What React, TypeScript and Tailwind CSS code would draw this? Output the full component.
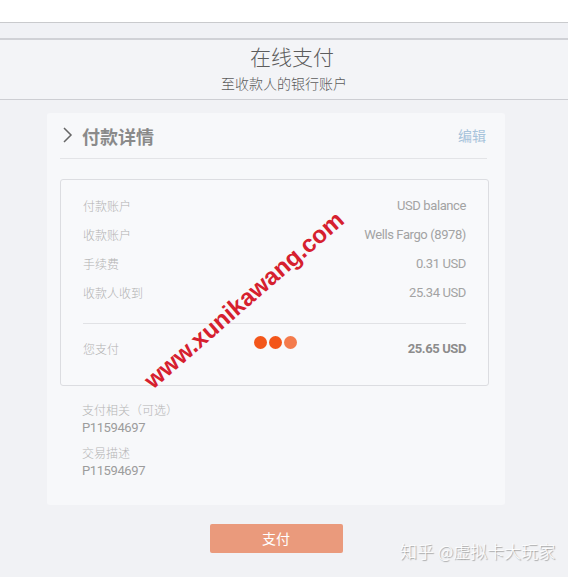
import React from 'react';

const rows = [
  { label: '付款账户', value: 'USD balance' },
  { label: '收款账户', value: 'Wells Fargo (8978)' },
  { label: '手续费', value: '0.31 USD' },
  { label: '收款人收到', value: '25.34 USD' },
];

const cjk = "font-['Noto_Sans_CJK_SC','Noto_Sans',sans-serif]";
const num = "font-['Roboto','Noto_Sans_CJK_SC',sans-serif] tracking-[-0.4px]";

export default function App() {
  return (
    <div className={`relative w-[568px] h-[577px] overflow-hidden bg-[#f1f2f5] ${cjk}`}>
      {/* top bars */}
      <div className="h-[23px] bg-white border-b border-[#c9cacd]" />
      <div className="h-[17px] bg-[#f0f1f5] border-b-2 border-[#d0d1d6]" />
      <div className="h-[60px] bg-[#f3f4f7] border-b border-[#cdced3] flex flex-col items-center">
        <div className="mt-[1px] pl-[16px] text-[21px] leading-[30px] font-light text-[#5c5c5c]">在线支付</div>
        <div className="mt-[1px] text-[14px] leading-[22px] font-light text-[#5c5c5c]">至收款人的银行账户</div>
      </div>

      <div className="w-[458px] ml-[47px] mt-[13px] bg-[#f7f8fa] rounded-[3px] pl-[13px] pr-[18px] pb-[25px]">
        <div className="flex items-center justify-between h-[46px] border-b border-[#e3e4e7]">
          <div className="flex items-center gap-[8px] pl-[2px]">
            <svg width="12" height="18" viewBox="0 0 12 18" className="mb-[1px]">
              <path d="M2 2 L9 9 L2 16" fill="none" stroke="#666" strokeWidth="1.5" />
            </svg>
            <span className="text-[18px] font-bold text-[#8a8a8a] leading-[24px]">付款详情</span>
          </div>
          <span className="text-[14px] text-[#a7c3db] pr-[1px]">编辑</span>
        </div>

        <div className="mt-[20px] w-[429px] border border-[#dcdde1] rounded-[3px] bg-[#f8f9fb] px-[22px] pt-[11px] pb-[11px]">
          {rows.map((r) => (
            <div key={r.label} className="flex items-center justify-between h-[29px]">
              <span className="text-[12px] font-light text-[#b2b2b2]">{r.label}</span>
              <span className={`${num} text-[13px] text-[#a3a3a3]`}>{r.value}</span>
            </div>
          ))}
          <div className="mt-[16px] border-t border-[#e1e2e5]" />
          <div className="flex items-center justify-between h-[50px]">
            <span className="text-[12px] font-light text-[#b2b2b2]">您支付</span>
            <span className={`${num} text-[13px] font-bold text-[#8c8c8c]`}>25.65 USD</span>
          </div>
        </div>

        <div className="pl-[22px] mt-[15px] flex flex-col">
          <span className="text-[12px] leading-[18px] font-light text-[#b5b5b5]">支付相关（可选）</span>
          <span className={`${num} text-[13px] leading-[18px] text-[#9c9c9c]`}>P11594697</span>
          <span className="mt-[7px] text-[12px] leading-[18px] font-light text-[#b5b5b5]">交易描述</span>
          <span className={`${num} text-[13px] leading-[18px] text-[#9c9c9c]`}>P11594697</span>
        </div>
      </div>

      <div className="w-[458px] ml-[47px] mt-[19px] flex justify-center">
        <button className="w-[133px] h-[29px] bg-[#ea9a7c] rounded-[2px] text-white text-[14px]">支付</button>
      </div>

      {/* loading dots */}
      <div className="absolute left-[254px] top-[336px] flex gap-[2px]">
        <div className="w-[13px] h-[13px] rounded-full bg-[#f3561a]" />
        <div className="w-[13px] h-[13px] rounded-full bg-[#f3561a]" />
        <div className="w-[13px] h-[13px] rounded-full bg-[#f47b4c]" />
      </div>

      {/* site watermark */}
      <div className="absolute left-[244px] top-[300px] -translate-x-1/2 -translate-y-1/2 -rotate-[41deg] whitespace-nowrap font-['Liberation_Sans',sans-serif] font-bold text-[24px] text-[#d6202e] leading-none">
        www.xunikawang.com
      </div>

      {/* zhihu watermark */}
      <div className="absolute left-[400px] top-[538px] text-[17px] font-light text-white [text-shadow:1px_1px_1px_#9a9a9a]">
        知乎 @虚拟卡大玩家
      </div>
    </div>
  );
}
